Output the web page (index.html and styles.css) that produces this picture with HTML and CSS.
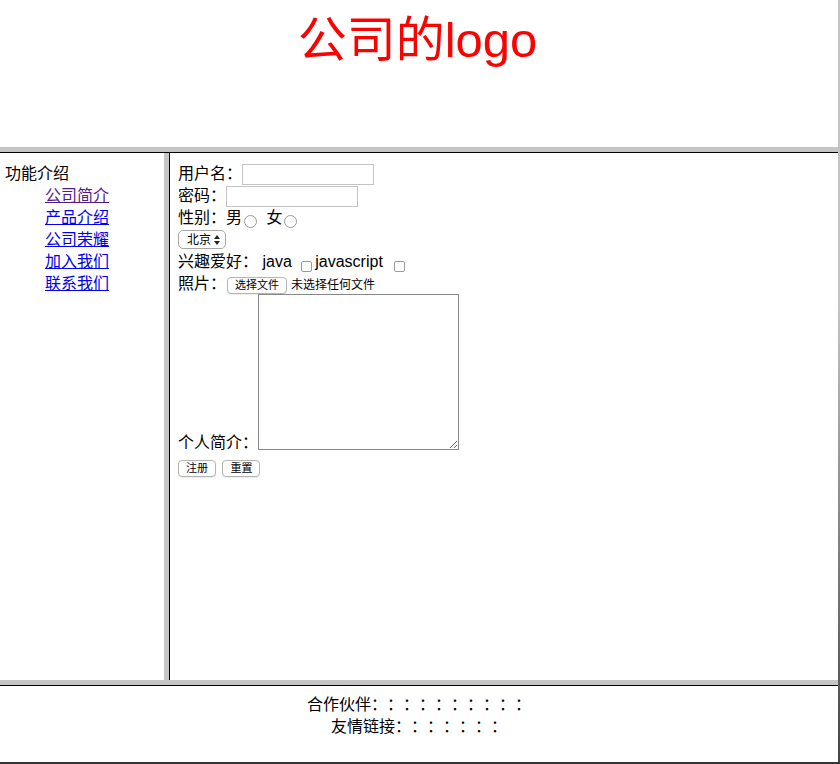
FILE: index.html
```html
<!DOCTYPE html>
<html lang="zh-CN">

<head>
    <meta charset="UTF-8">
    <meta name="viewport" content="width=device-width, initial-scale=1.0">
    <title>公司首页</title>
    <link rel="stylesheet" href="styles.css">
</head>

<body>
    <div class="window">
        <div class="page">
            <div class="top">
                <div class="logo">公司的logo</div>
            </div>
            <div class="hbar"></div>

            <div class="middle">
                <div class="menu">
                    <dl>
                        <dt>功能介绍</dt>
                        <dd><a href="#" class="visited">公司简介</a></dd>
                        <dd><a href="#">产品介绍</a></dd>
                        <dd><a href="#">公司荣耀</a></dd>
                        <dd><a href="#">加入我们</a></dd>
                        <dd><a href="#">联系我们</a></dd>
                    </dl>
                </div>
                <div class="vbar"></div>

                <div class="main">
                    <form>
                        <div class="row">用户名：<input type="text" class="text"></div>
                        <div class="row">密码：<input type="password" class="text"></div>
                        <div class="row">性别：男<input type="radio" name="sex" class="radio"> 女<input type="radio" name="sex" class="radio"></div>
                        <div class="row">
                            <span class="select-wrap">
                                <select class="city">
                                    <option>北京</option>
                                    <option>上海</option>
                                    <option>广州</option>
                                </select>
                                <svg class="arrows" width="6" height="10" viewBox="0 0 6 10">
                                    <path d="M0 4 L3 0 L6 4 Z M0 6 L3 10 L6 6 Z" fill="#222" />
                                </svg>
                            </span>
                        </div>
                        <div class="row">兴趣爱好： java <input type="checkbox" class="check">javascript <input type="checkbox" class="check last"></div>
                        <div class="row">照片：<label class="btn file-btn" for="photo">选择文件</label><span class="filename">未选择任何文件</span><input type="file" id="photo" class="hidden"></div>
                        <div class="row-intro">
                            <span class="intro-label">个人简介：</span>
                            <textarea class="intro"></textarea>
                        </div>
                        <div class="row buttons">
                            <button type="submit" class="btn">注册</button>
                            <button type="reset" class="btn">重置</button>
                        </div>
                    </form>
                </div>
            </div>

            <div class="hbar"></div>
            <div class="bottom">
                <p>合作伙伴：：：：：：：：：：</p>
                <p>友情链接：：：：：：：</p>
            </div>
        </div>
        <div class="edge"></div>
    </div>
</body>

</html>
```

FILE: styles.css
```css
html,
body {
    margin: 0;
    padding: 0;
}

body {
    font-family: "Liberation Sans", "Noto Sans CJK SC", sans-serif;
    font-size: 16px;
    line-height: 22px;
    color: #000;
    background: #fff;
    text-spacing-trim: space-all;
}

.window {
    display: flex;
    height: 764px;
    box-sizing: border-box;
    border-bottom: 2px solid #333;
}

.page {
    width: 838px;
    display: flex;
    flex-direction: column;
}

.edge {
    width: 2px;
    background: linear-gradient(#c4c4c4, #c4c4c4 40%, #444);
}

/* top frame */
.top {
    height: 147px;
    padding: 12px 3px 0 0;
    box-sizing: border-box;
    text-align: center;
}

.logo {
    font-size: 49px;
    line-height: 56px;
    color: red;
}

.hbar {
    height: 5px;
    background: #c6c6c6;
    border-bottom: 1px solid #000;
}

/* middle frames */
.middle {
    flex: 1;
    display: flex;
}

.menu {
    width: 164px;
    padding: 10px 0 0 5px;
    box-sizing: border-box;
}

.menu dl {
    margin: 0;
}

.menu dd {
    margin-left: 40px;
}

.menu a {
    color: #0000ee;
}

.menu a.visited {
    color: #551a8b;
}

.vbar {
    width: 5px;
    background: #c6c6c6;
    border-right: 1px solid #000;
}

.main {
    flex: 1;
    padding: 9px 8px;
}

form {
    margin: 0;
}

.row {
    height: 22px;
    line-height: 24px;
    white-space: nowrap;
}

.text {
    width: 132px;
    height: 21px;
    margin: 2px 0 0;
    padding: 0 2px;
    box-sizing: border-box;
    border: 1px solid #c4c4c4;
    vertical-align: top;
    font-size: 13px;
}

.radio {
    appearance: none;
    width: 13px;
    height: 13px;
    margin: 9px 5px 0 2px;
    border: 1px solid #9a9a9a;
    border-radius: 50%;
    background: #fff;
    vertical-align: top;
}

.check {
    appearance: none;
    width: 11px;
    height: 11px;
    margin: 11px 3px 0 5px;
    box-sizing: border-box;
    border: 1px solid #9a9a9a;
    border-radius: 2px;
    background: #fff;
    vertical-align: top;
}

.check.last {
    margin-left: 7px;
}

.select-wrap {
    position: relative;
    display: inline-block;
    vertical-align: top;
    margin-top: 2px;
}

.city {
    appearance: none;
    width: 48px;
    height: 19px;
    margin: 0;
    padding: 0 0 0 8px;
    border: 1px solid #a6a6a6;
    border-radius: 5px;
    background: #fff;
    font-family: "Liberation Sans", "Noto Sans CJK SC", sans-serif;
    font-size: 12px;
    color: #000;
    display: block;
}

.arrows {
    position: absolute;
    right: 6px;
    top: 5px;
}

.btn {
    display: inline-block;
    height: 17px;
    margin: 0;
    padding: 0 7px;
    box-sizing: border-box;
    border: 1px solid #b4b4b4;
    border-radius: 4px;
    background: #fff;
    box-shadow: 0 1px 1px rgba(0, 0, 0, 0.08);
    font-family: "Liberation Sans", "Noto Sans CJK SC", sans-serif;
    font-size: 11px;
    line-height: 15px;
    color: #000;
    vertical-align: top;
    cursor: pointer;
}

.file-btn {
    margin: 5px 0 0 1px;
}

.filename {
    margin-left: 4px;
    font-size: 12px;
}

.hidden {
    display: none;
}

.row-intro {
    display: flex;
    align-items: flex-end;
}

.intro-label {
    line-height: 22px;
}

.intro {
    width: 201px;
    height: 156px;
    margin: 0 0 4px;
    box-sizing: border-box;
    border: 1px solid #888;
    padding: 2px;
    font-size: 13px;
}

.buttons {
    margin-top: 3px;
}

.buttons .btn {
    margin-top: 3px;
    margin-right: 2px;
}

/* bottom frame */
.bottom {
    flex: 0 0 76px;
    padding-top: 8px;
    box-sizing: border-box;
    text-align: center;
}

.bottom p {
    margin: 0;
}
```
